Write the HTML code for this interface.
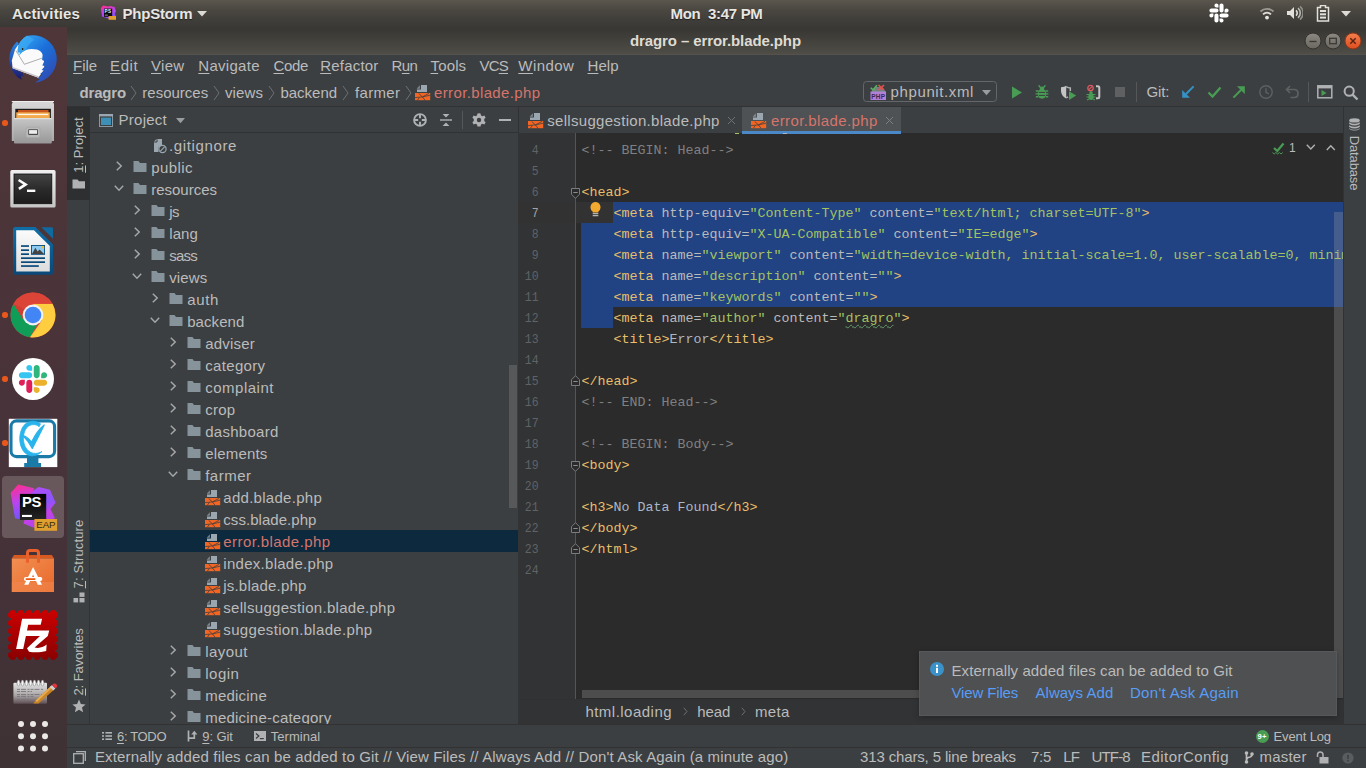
<!DOCTYPE html>
<html lang="en"><head><meta charset="utf-8"><title>dragro – error.blade.php</title>
<style>
html,body{margin:0;padding:0;}
body{width:1366px;height:768px;overflow:hidden;background:#3c3f41;position:relative;font-family:"Liberation Sans",sans-serif;}
.b{position:absolute;display:block;}
.t{position:absolute;white-space:pre;line-height:20px;font-family:"Liberation Sans",sans-serif;}
.t u{text-decoration:underline;text-underline-offset:1.5px;text-decoration-thickness:1px;}
.c{position:absolute;white-space:pre;font-family:"Liberation Mono",monospace;font-size:13.333px;line-height:21px;height:21px;}
</style></head>
<body>
<div class="b" style="left:67px;top:55px;width:1299px;height:51px;background:#3c3f41;"></div>
<span class="t" style="left:73.1px;top:55.8px;font-size:15px;color:#bbb;letter-spacing:-0.07px;"><u>F</u>ile</span>
<span class="t" style="left:110.0px;top:55.8px;font-size:15px;color:#bbb;letter-spacing:0.61px;"><u>E</u>dit</span>
<span class="t" style="left:151.0px;top:55.8px;font-size:15px;color:#bbb;letter-spacing:0.31px;"><u>V</u>iew</span>
<span class="t" style="left:198.3px;top:55.8px;font-size:15px;color:#bbb;letter-spacing:0.29px;"><u>N</u>avigate</span>
<span class="t" style="left:273.5px;top:55.8px;font-size:15px;color:#bbb;letter-spacing:-0.34px;"><u>C</u>ode</span>
<span class="t" style="left:320.2px;top:55.8px;font-size:15px;color:#bbb;letter-spacing:0.20px;"><u>R</u>efactor</span>
<span class="t" style="left:391.6px;top:55.8px;font-size:15px;color:#bbb;letter-spacing:-0.61px;">R<u>u</u>n</span>
<span class="t" style="left:430.5px;top:55.8px;font-size:15px;color:#bbb;letter-spacing:0.15px;"><u>T</u>ools</span>
<span class="t" style="left:479.5px;top:55.8px;font-size:15px;color:#bbb;letter-spacing:-0.80px;">VC<u>S</u></span>
<span class="t" style="left:518.3px;top:55.8px;font-size:15px;color:#bbb;letter-spacing:0.46px;"><u>W</u>indow</span>
<span class="t" style="left:587.5px;top:55.8px;font-size:15px;color:#bbb;letter-spacing:0.04px;"><u>H</u>elp</span>
<span class="t" style="left:79.5px;top:82.8px;font-size:15px;font-weight:700;color:#bbb;letter-spacing:-0.17px;">dragro</span>
<svg class="b" style="left:130px;top:84.5px;" width="7" height="16" viewBox="0 0 7 16"><path d="M1 1 L6 8 L1 15" fill="none" stroke="#6e7173" stroke-width="1"/></svg>
<span class="t" style="left:142.3px;top:82.8px;font-size:15px;color:#bbb;letter-spacing:0.00px;">resources</span>
<svg class="b" style="left:213px;top:84.5px;" width="7" height="16" viewBox="0 0 7 16"><path d="M1 1 L6 8 L1 15" fill="none" stroke="#6e7173" stroke-width="1"/></svg>
<span class="t" style="left:225.0px;top:82.8px;font-size:15px;color:#bbb;letter-spacing:0.10px;">views</span>
<svg class="b" style="left:268px;top:84.5px;" width="7" height="16" viewBox="0 0 7 16"><path d="M1 1 L6 8 L1 15" fill="none" stroke="#6e7173" stroke-width="1"/></svg>
<span class="t" style="left:280.5px;top:82.8px;font-size:15px;color:#bbb;letter-spacing:-0.03px;">backend</span>
<svg class="b" style="left:342px;top:84.5px;" width="7" height="16" viewBox="0 0 7 16"><path d="M1 1 L6 8 L1 15" fill="none" stroke="#6e7173" stroke-width="1"/></svg>
<span class="t" style="left:355.0px;top:82.8px;font-size:15px;color:#bbb;letter-spacing:0.34px;">farmer</span>
<svg class="b" style="left:404.5px;top:84.5px;" width="7" height="16" viewBox="0 0 7 16"><path d="M1 1 L6 8 L1 15" fill="none" stroke="#6e7173" stroke-width="1"/></svg>
<svg class="b" style="left:415px;top:85px;" width="16" height="16" viewBox="0 0 16 16"><path d="M6 0 H12 V7 H2 V4.6 H6Z" fill="#9aa7b0"/><path d="M4.9 0.3 V3.7 H1.6Z" fill="#9aa7b0" opacity=".7"/>
<rect x="0" y="8" width="15.2" height="7.2" fill="#f26522"/>
<path d="M0 12.6 L7.4 11.9 L15.2 10.2 M3.6 8.4 L7.4 11.9 L10 15.2 M7.4 11.9 L14 8.4 M2.4 15.2 L4.4 12.3" stroke="#3c3f41" stroke-width=".9" fill="none" opacity=".85"/></svg>
<span class="t" style="left:434.0px;top:82.8px;font-size:15px;color:#d5756c;letter-spacing:0.37px;">error.blade.php</span>
<div class="b" style="left:863px;top:81px;width:134px;height:21px;border:1px solid #646769;border-radius:3.5px;box-sizing:border-box;"></div>
<svg class="b" style="left:870px;top:84px;" width="17" height="17" viewBox="0 0 17 17"><rect x="0.5" y="7.5" width="15.5" height="8.5" fill="#b180d9"/><path d="M1 8 L6 3 H12 L16 8Z" fill="#9aa7b0" opacity=".6"/>
<path d="M0.8 3.8 L3 6 L7 1.3" fill="none" stroke="#56b35f" stroke-width="1.6"/><path d="M8.5 1 L14 6.2 M14 1 L8.5 6.2" stroke="#e0524c" stroke-width="1.7"/></svg>
<span class="t" style="left:871.3px;top:87.0px;font-size:6.5px;font-weight:700;color:#3c2a52;letter-spacing:0.21px;">PHP</span>
<span class="t" style="left:890.6px;top:81.8px;font-size:15px;color:#bbb;letter-spacing:0.61px;">phpunit.xml</span>
<svg class="b" style="left:982px;top:90px;" width="9" height="6" viewBox="0 0 9 6"><path d="M0 0 H9 L4.5 5.2Z" fill="#9a9da0"/></svg>
<svg class="b" style="left:1011px;top:86px;" width="12" height="13" viewBox="0 0 12 13"><path d="M1 0.5 L11 6.5 L1 12.5Z" fill="#499c54"/></svg>
<svg class="b" style="left:1035px;top:85px;" width="14" height="14" viewBox="0 0 14 14"><g fill="#499c54"><ellipse cx="7" cy="8.8" rx="4.3" ry="5"/><circle cx="7" cy="3.8" r="2.2"/></g>
<g stroke="#499c54" stroke-width="1.4" fill="none"><path d="M3.6 0.3 L5.8 3M10.4 0.3 L8.2 3M0.8 6H3.4M10.6 6H13.2M0.6 8.9H3M11 8.9H13.4M0.8 11.8H3.4M10.6 11.8H13.2"/></g>
<g stroke="#3c3f41" stroke-width="1"><path d="M3.8 7.4H10.2M3.8 10.4H10.2"/></g></svg>
<svg class="b" style="left:1060px;top:85px;" width="17" height="17" viewBox="0 0 17 17"><path d="M1 2.200 Q4.500 2.200 6.200 0.800 V13.400 Q1.800 11.500 1 6.500Z" fill="#c4c4c4"/><path d="M6.200 1.600 Q8 2.900 10.300 3 V6" fill="none" stroke="#afb1b3" stroke-width="1.500"/><path d="M6.200 12.800 Q7.200 12.400 8 11.800" fill="none" stroke="#afb1b3" stroke-width="1.500"/><path d="M9 6.200 L16.200 10.600 L9 15Z" fill="#499c54"/></svg>
<svg class="b" style="left:1086px;top:84px;" width="17" height="18" viewBox="0 0 17 18"><circle cx="4.5" cy="4" r="2.7" fill="none" stroke="#db5860" stroke-width="1.3"/><path d="M2.6 5.9L6.4 2.1" stroke="#db5860" stroke-width="1.2"/>
<g fill="#499c54"><ellipse cx="5" cy="12.5" rx="2.6" ry="3.6"/><circle cx="5" cy="8.7" r="1.6"/></g><g stroke="#499c54" stroke-width="1.1"><path d="M0.5 10.5H3M9.5 10.5H7M0.5 13H3M9.5 13H7M1 16L3 15M9 16L7 15"/></g>
<path d="M10 2.200 H11.800 Q13.300 2.200 13.300 3.700 V12.800 Q13.300 14.300 11.800 14.300 H10" fill="none" stroke="#c4c4c4" stroke-width="2"/></svg>
<div class="b" style="left:1115px;top:87px;width:10px;height:10px;background:#5e6062;"></div>
<div class="b" style="left:1136px;top:82px;width:1px;height:20px;background:#555759;"></div>
<span class="t" style="left:1146.6px;top:81.8px;font-size:15px;color:#bbb;letter-spacing:-0.14px;">Git:</span>
<svg class="b" style="left:1181px;top:85px;" width="14" height="14" viewBox="0 0 14 14"><path d="M12.6 1.4 L5 9" fill="none" stroke="#3592c4" stroke-width="2"/><path d="M1.2 12.8 V5 L9 12.8Z" fill="#3592c4"/></svg>
<svg class="b" style="left:1207px;top:85px;" width="15" height="14" viewBox="0 0 15 14"><path d="M1.5 7.5 L5.5 11.5 L13.5 2.5" fill="none" stroke="#499c54" stroke-width="2.3"/></svg>
<svg class="b" style="left:1232px;top:85px;" width="14" height="14" viewBox="0 0 14 14"><path d="M1.400 12.600 L9 5" fill="none" stroke="#499c54" stroke-width="2"/><path d="M12.800 1.200 V9 L5 1.200Z" fill="#499c54"/></svg>
<svg class="b" style="left:1258px;top:84px;" width="16" height="16" viewBox="0 0 16 16"><circle cx="8" cy="8" r="6.2" fill="none" stroke="#5e6062" stroke-width="1.4"/><path d="M8 4.2V8.4L10.8 9.8" fill="none" stroke="#5e6062" stroke-width="1.4"/></svg>
<svg class="b" style="left:1285px;top:85px;" width="15" height="14" viewBox="0 0 15 14"><path d="M5 1 L1.5 4.5 L5 8 M2 4.5 H9 Q13 4.5 13 8.5 Q13 12.5 9 12.5 H5.5" fill="none" stroke="#5e6062" stroke-width="1.7"/></svg>
<div class="b" style="left:1308px;top:82px;width:1px;height:20px;background:#555759;"></div>
<svg class="b" style="left:1317px;top:85px;" width="16" height="14" viewBox="0 0 16 14"><rect x="0.8" y="0.8" width="14" height="12" fill="none" stroke="#afb1b3" stroke-width="1.5"/><rect x="0.8" y="0.8" width="14" height="2.6" fill="#afb1b3"/><path d="M4.5 5 L9.5 8 L4.5 11Z" fill="#499c54"/></svg>
<svg class="b" style="left:1343px;top:85px;" width="16" height="16" viewBox="0 0 16 16"><circle cx="6.2" cy="6.2" r="4.6" fill="none" stroke="#afb1b3" stroke-width="2"/><path d="M9.6 9.6 L14.5 14.5" stroke="#afb1b3" stroke-width="2.4"/></svg>
<div class="b" style="left:67px;top:106px;width:1299px;height:1px;background:#323232;"></div>
<div class="b" style="left:67px;top:107px;width:23px;height:640px;background:#3c3f41;"></div>
<div class="b" style="left:67px;top:107px;width:23px;height:92.5px;background:#2d2f30;"></div>
<div class="b" style="left:89px;top:199.5px;width:1px;height:524.5px;background:#323537;"></div>
<span class="t" style="left:78.8px;top:144.75px;font-size:13px;color:#bbb;letter-spacing:0.06px;line-height:16px;transform:translate(-50%,-50%) rotate(-90deg);"><u>1</u>: Project</span>
<svg class="b" style="left:72px;top:179px;" width="14" height="10" viewBox="0 0 14 10"><path d="M0.5 0.5 H5.5 L7 2.3 H13 V9.5 H0.5Z" fill="#afb1b3"/></svg>
<span class="t" style="left:78.8px;top:554.0px;font-size:13px;color:#bbb;letter-spacing:0.13px;line-height:16px;transform:translate(-50%,-50%) rotate(-90deg);"><u>7</u>: Structure</span>
<svg class="b" style="left:73px;top:592px;" width="12" height="11" viewBox="0 0 12 11"><rect x="6.5" y="0.5" width="5" height="4.4" fill="#afb1b3"/><rect x="0.5" y="6" width="4.6" height="4.4" fill="#afb1b3"/><rect x="6.5" y="6" width="5" height="4.4" fill="#afb1b3"/></svg>
<span class="t" style="left:78.8px;top:661.6px;font-size:13px;color:#bbb;letter-spacing:-0.06px;line-height:16px;transform:translate(-50%,-50%) rotate(-90deg);"><u>2</u>: Favorites</span>
<svg class="b" style="left:72px;top:699px;" width="14" height="14" viewBox="0 0 14 14"><path d="M7 0.6 L8.9 5 L13.6 5.4 L10 8.5 L11.1 13.2 L7 10.7 L2.9 13.2 L4 8.5 L0.4 5.4 L5.1 5Z" fill="#afb1b3"/></svg>
<div class="b" style="left:1343px;top:107px;width:23px;height:640px;background:#3c3f41;"></div>
<div class="b" style="left:1342.5px;top:107px;width:1px;height:617px;background:#323232;"></div>
<svg class="b" style="left:1349px;top:118px;" width="11" height="13" viewBox="0 0 11 13"><g fill="#afb1b3"><ellipse cx="5.5" cy="2.4" rx="5.3" ry="2.2"/><path d="M0.2 4.2 Q5.5 7.2 10.8 4.2 V6 Q5.5 9 0.2 6Z"/><path d="M0.2 7.2 Q5.5 10.2 10.8 7.2 V9 Q5.5 12 0.2 9Z"/><path d="M0.2 10.2 Q5.5 13.2 10.8 10.2 V11 Q5.5 14 0.2 11Z"/></g></svg>
<span class="t" style="left:1354.3px;top:163.35px;font-size:13px;color:#bbb;letter-spacing:-0.12px;line-height:16px;transform:translate(-50%,-50%) rotate(90deg);">Database</span>
<div class="b" style="left:90px;top:107px;width:428px;height:617px;background:#3c3f41;"></div>
<div class="b" style="left:90px;top:132px;width:428px;height:1px;background:#303335;"></div>
<svg class="b" style="left:99px;top:114px;" width="14" height="13" viewBox="0 0 14 13"><rect x="0.5" y="0.5" width="13" height="12" fill="#3c3f41" stroke="#8b979e" stroke-width="1"/><rect x="0" y="0" width="14" height="2.4" fill="#9aa7b0"/><rect x="2" y="3.6" width="10" height="7.4" fill="#3e8fb5"/></svg>
<span class="t" style="left:118.6px;top:109.5px;font-size:15px;color:#bbb;letter-spacing:0.24px;">Project</span>
<svg class="b" style="left:175.5px;top:118px;" width="9" height="6" viewBox="0 0 9 6"><path d="M0 0 H9 L4.5 5.2Z" fill="#9a9da0"/></svg>
<svg class="b" style="left:413px;top:113px;" width="14" height="14" viewBox="0 0 14 14"><circle cx="7" cy="7" r="5.9" fill="none" stroke="#afb1b3" stroke-width="1.9"/><path d="M7 1V5.2M7 8.8V13M1 7H5.2M8.8 7H13" stroke="#afb1b3" stroke-width="1.9"/></svg>
<svg class="b" style="left:439px;top:113px;" width="14" height="14" viewBox="0 0 14 14"><path d="M1 7H13" stroke="#afb1b3" stroke-width="1.4"/><path d="M3.6 1 H10.4 L7 4.6Z M3.6 13 H10.4 L7 9.4Z" fill="#afb1b3"/></svg>
<div class="b" style="left:462px;top:111px;width:1px;height:18px;background:#555759;"></div>
<svg class="b" style="left:471.5px;top:113px;" width="14" height="14" viewBox="0 0 14 14"><path d="M7 0.3 L8.5 0.5 L9 2.4 L10.6 3.3 L12.4 2.6 L13.6 4.7 L12.2 6 V8 L13.6 9.3 L12.4 11.4 L10.6 10.7 L9 11.6 L8.5 13.5 H5.5 L5 11.6 L3.4 10.7 L1.6 11.4 L0.4 9.3 L1.8 8 V6 L0.4 4.7 L1.6 2.6 L3.4 3.3 L5 2.4 L5.5 0.5Z" fill="#afb1b3"/><circle cx="7" cy="7" r="2.2" fill="#3c3f41"/></svg>
<div class="b" style="left:498.5px;top:119.3px;width:12.5px;height:1.7px;background:#afb1b3;"></div>
<svg class="b" style="left:151.5px;top:138px;" width="16" height="16" viewBox="0 0 16 16"><path d="M4.5 1 H10 V9 H2 V3.5Z" fill="#9aa7b0"/><path d="M5 1.2V4H2.2" fill="none" stroke="#3c3f41" stroke-width="1"/><circle cx="10.5" cy="11" r="3.6" fill="#3c3f41" stroke="#9aa7b0" stroke-width="1.2"/><path d="M8.2 13.3L12.8 8.7" stroke="#9aa7b0" stroke-width="1.1"/><path d="M2 9 H6.5 V14 H2Z" fill="#9aa7b0"/></svg>
<span class="t" style="left:169.0px;top:135.8px;font-size:15px;color:#bbb;letter-spacing:0.63px;">.gitignore</span>
<svg class="b" style="left:116px;top:161.3px;" width="7" height="10" viewBox="0 0 7 10"><path d="M0.8 0.8 L5.2 5 L0.8 9.2" fill="none" stroke="#a4a6a8" stroke-width="1.5"/></svg>
<svg class="b" style="left:133px;top:159.6px;" width="14" height="13" viewBox="0 0 14 13"><path d="M0.5 1 H5.5 L7 3 H13.5 V12 H0.5Z" fill="#87939a"/></svg>
<span class="t" style="left:151.2px;top:157.8px;font-size:15px;color:#bbb;letter-spacing:0.42px;">public</span>
<svg class="b" style="left:114px;top:185.3px;" width="10" height="7" viewBox="0 0 10 7"><path d="M0.8 0.8 L5 5.2 L9.2 0.8" fill="none" stroke="#a4a6a8" stroke-width="1.5"/></svg>
<svg class="b" style="left:133px;top:181.6px;" width="14" height="13" viewBox="0 0 14 13"><path d="M0.5 1 H5.5 L7 3 H13.5 V12 H0.5Z" fill="#87939a"/></svg>
<span class="t" style="left:151.2px;top:179.8px;font-size:15px;color:#bbb;letter-spacing:-0.01px;">resources</span>
<svg class="b" style="left:134px;top:205.3px;" width="7" height="10" viewBox="0 0 7 10"><path d="M0.8 0.8 L5.2 5 L0.8 9.2" fill="none" stroke="#a4a6a8" stroke-width="1.5"/></svg>
<svg class="b" style="left:151px;top:203.6px;" width="14" height="13" viewBox="0 0 14 13"><path d="M0.5 1 H5.5 L7 3 H13.5 V12 H0.5Z" fill="#87939a"/></svg>
<span class="t" style="left:169.2px;top:201.8px;font-size:15px;color:#bbb;letter-spacing:-0.52px;">js</span>
<svg class="b" style="left:134px;top:227.3px;" width="7" height="10" viewBox="0 0 7 10"><path d="M0.8 0.8 L5.2 5 L0.8 9.2" fill="none" stroke="#a4a6a8" stroke-width="1.5"/></svg>
<svg class="b" style="left:151px;top:225.6px;" width="14" height="13" viewBox="0 0 14 13"><path d="M0.5 1 H5.5 L7 3 H13.5 V12 H0.5Z" fill="#87939a"/></svg>
<span class="t" style="left:169.2px;top:223.8px;font-size:15px;color:#bbb;letter-spacing:0.11px;">lang</span>
<svg class="b" style="left:134px;top:249.3px;" width="7" height="10" viewBox="0 0 7 10"><path d="M0.8 0.8 L5.2 5 L0.8 9.2" fill="none" stroke="#a4a6a8" stroke-width="1.5"/></svg>
<svg class="b" style="left:151px;top:247.6px;" width="14" height="13" viewBox="0 0 14 13"><path d="M0.5 1 H5.5 L7 3 H13.5 V12 H0.5Z" fill="#87939a"/></svg>
<span class="t" style="left:169.2px;top:245.8px;font-size:15px;color:#bbb;letter-spacing:-0.76px;">sass</span>
<svg class="b" style="left:132px;top:273.3px;" width="10" height="7" viewBox="0 0 10 7"><path d="M0.8 0.8 L5 5.2 L9.2 0.8" fill="none" stroke="#a4a6a8" stroke-width="1.5"/></svg>
<svg class="b" style="left:151px;top:269.6px;" width="14" height="13" viewBox="0 0 14 13"><path d="M0.5 1 H5.5 L7 3 H13.5 V12 H0.5Z" fill="#87939a"/></svg>
<span class="t" style="left:169.2px;top:267.8px;font-size:15px;color:#bbb;letter-spacing:0.16px;">views</span>
<svg class="b" style="left:152px;top:293.3px;" width="7" height="10" viewBox="0 0 7 10"><path d="M0.8 0.8 L5.2 5 L0.8 9.2" fill="none" stroke="#a4a6a8" stroke-width="1.5"/></svg>
<svg class="b" style="left:169px;top:291.6px;" width="14" height="13" viewBox="0 0 14 13"><path d="M0.5 1 H5.5 L7 3 H13.5 V12 H0.5Z" fill="#87939a"/></svg>
<span class="t" style="left:187.2px;top:289.8px;font-size:15px;color:#bbb;letter-spacing:0.65px;">auth</span>
<svg class="b" style="left:150px;top:317.3px;" width="10" height="7" viewBox="0 0 10 7"><path d="M0.8 0.8 L5 5.2 L9.2 0.8" fill="none" stroke="#a4a6a8" stroke-width="1.5"/></svg>
<svg class="b" style="left:169px;top:313.6px;" width="14" height="13" viewBox="0 0 14 13"><path d="M0.5 1 H5.5 L7 3 H13.5 V12 H0.5Z" fill="#87939a"/></svg>
<span class="t" style="left:187.2px;top:311.8px;font-size:15px;color:#bbb;letter-spacing:0.08px;">backend</span>
<svg class="b" style="left:170px;top:337.3px;" width="7" height="10" viewBox="0 0 7 10"><path d="M0.8 0.8 L5.2 5 L0.8 9.2" fill="none" stroke="#a4a6a8" stroke-width="1.5"/></svg>
<svg class="b" style="left:187px;top:335.6px;" width="14" height="13" viewBox="0 0 14 13"><path d="M0.5 1 H5.5 L7 3 H13.5 V12 H0.5Z" fill="#87939a"/></svg>
<span class="t" style="left:205.2px;top:333.8px;font-size:15px;color:#bbb;letter-spacing:0.21px;">adviser</span>
<svg class="b" style="left:170px;top:359.3px;" width="7" height="10" viewBox="0 0 7 10"><path d="M0.8 0.8 L5.2 5 L0.8 9.2" fill="none" stroke="#a4a6a8" stroke-width="1.5"/></svg>
<svg class="b" style="left:187px;top:357.6px;" width="14" height="13" viewBox="0 0 14 13"><path d="M0.5 1 H5.5 L7 3 H13.5 V12 H0.5Z" fill="#87939a"/></svg>
<span class="t" style="left:205.2px;top:355.8px;font-size:15px;color:#bbb;letter-spacing:0.34px;">category</span>
<svg class="b" style="left:170px;top:381.3px;" width="7" height="10" viewBox="0 0 7 10"><path d="M0.8 0.8 L5.2 5 L0.8 9.2" fill="none" stroke="#a4a6a8" stroke-width="1.5"/></svg>
<svg class="b" style="left:187px;top:379.6px;" width="14" height="13" viewBox="0 0 14 13"><path d="M0.5 1 H5.5 L7 3 H13.5 V12 H0.5Z" fill="#87939a"/></svg>
<span class="t" style="left:205.2px;top:377.8px;font-size:15px;color:#bbb;letter-spacing:0.51px;">complaint</span>
<svg class="b" style="left:170px;top:403.3px;" width="7" height="10" viewBox="0 0 7 10"><path d="M0.8 0.8 L5.2 5 L0.8 9.2" fill="none" stroke="#a4a6a8" stroke-width="1.5"/></svg>
<svg class="b" style="left:187px;top:401.6px;" width="14" height="13" viewBox="0 0 14 13"><path d="M0.5 1 H5.5 L7 3 H13.5 V12 H0.5Z" fill="#87939a"/></svg>
<span class="t" style="left:205.2px;top:399.8px;font-size:15px;color:#bbb;letter-spacing:0.28px;">crop</span>
<svg class="b" style="left:170px;top:425.3px;" width="7" height="10" viewBox="0 0 7 10"><path d="M0.8 0.8 L5.2 5 L0.8 9.2" fill="none" stroke="#a4a6a8" stroke-width="1.5"/></svg>
<svg class="b" style="left:187px;top:423.6px;" width="14" height="13" viewBox="0 0 14 13"><path d="M0.5 1 H5.5 L7 3 H13.5 V12 H0.5Z" fill="#87939a"/></svg>
<span class="t" style="left:205.2px;top:421.8px;font-size:15px;color:#bbb;letter-spacing:0.27px;">dashboard</span>
<svg class="b" style="left:170px;top:447.3px;" width="7" height="10" viewBox="0 0 7 10"><path d="M0.8 0.8 L5.2 5 L0.8 9.2" fill="none" stroke="#a4a6a8" stroke-width="1.5"/></svg>
<svg class="b" style="left:187px;top:445.6px;" width="14" height="13" viewBox="0 0 14 13"><path d="M0.5 1 H5.5 L7 3 H13.5 V12 H0.5Z" fill="#87939a"/></svg>
<span class="t" style="left:205.2px;top:443.8px;font-size:15px;color:#bbb;letter-spacing:0.18px;">elements</span>
<svg class="b" style="left:168px;top:471.3px;" width="10" height="7" viewBox="0 0 10 7"><path d="M0.8 0.8 L5 5.2 L9.2 0.8" fill="none" stroke="#a4a6a8" stroke-width="1.5"/></svg>
<svg class="b" style="left:187px;top:467.6px;" width="14" height="13" viewBox="0 0 14 13"><path d="M0.5 1 H5.5 L7 3 H13.5 V12 H0.5Z" fill="#87939a"/></svg>
<span class="t" style="left:205.2px;top:465.8px;font-size:15px;color:#bbb;letter-spacing:0.49px;">farmer</span>
<svg class="b" style="left:205px;top:490px;" width="16" height="16" viewBox="0 0 16 16"><path d="M6 0 H12 V7 H2 V4.6 H6Z" fill="#9aa7b0"/><path d="M4.9 0.3 V3.7 H1.6Z" fill="#9aa7b0" opacity=".7"/>
<rect x="0" y="8" width="15.2" height="7.2" fill="#f26522"/>
<path d="M0 12.6 L7.4 11.9 L15.2 10.2 M3.6 8.4 L7.4 11.9 L10 15.2 M7.4 11.9 L14 8.4 M2.4 15.2 L4.4 12.3" stroke="#3c3f41" stroke-width=".9" fill="none" opacity=".85"/></svg>
<span class="t" style="left:223.3px;top:487.8px;font-size:15px;color:#bbb;letter-spacing:0.28px;">add.blade.php</span>
<svg class="b" style="left:205px;top:512px;" width="16" height="16" viewBox="0 0 16 16"><path d="M6 0 H12 V7 H2 V4.6 H6Z" fill="#9aa7b0"/><path d="M4.9 0.3 V3.7 H1.6Z" fill="#9aa7b0" opacity=".7"/>
<rect x="0" y="8" width="15.2" height="7.2" fill="#f26522"/>
<path d="M0 12.6 L7.4 11.9 L15.2 10.2 M3.6 8.4 L7.4 11.9 L10 15.2 M7.4 11.9 L14 8.4 M2.4 15.2 L4.4 12.3" stroke="#3c3f41" stroke-width=".9" fill="none" opacity=".85"/></svg>
<span class="t" style="left:223.3px;top:509.8px;font-size:15px;color:#bbb;letter-spacing:0.05px;">css.blade.php</span>
<div class="b" style="left:90px;top:530px;width:428px;height:22px;background:#0d293e;"></div>
<svg class="b" style="left:205px;top:534px;" width="16" height="16" viewBox="0 0 16 16"><path d="M6 0 H12 V7 H2 V4.6 H6Z" fill="#9aa7b0"/><path d="M4.9 0.3 V3.7 H1.6Z" fill="#9aa7b0" opacity=".7"/>
<rect x="0" y="8" width="15.2" height="7.2" fill="#f26522"/>
<path d="M0 12.6 L7.4 11.9 L15.2 10.2 M3.6 8.4 L7.4 11.9 L10 15.2 M7.4 11.9 L14 8.4 M2.4 15.2 L4.4 12.3" stroke="#3c3f41" stroke-width=".9" fill="none" opacity=".85"/></svg>
<span class="t" style="left:223.3px;top:531.8px;font-size:15px;color:#d5756c;letter-spacing:0.42px;">error.blade.php</span>
<svg class="b" style="left:205px;top:556px;" width="16" height="16" viewBox="0 0 16 16"><path d="M6 0 H12 V7 H2 V4.6 H6Z" fill="#9aa7b0"/><path d="M4.9 0.3 V3.7 H1.6Z" fill="#9aa7b0" opacity=".7"/>
<rect x="0" y="8" width="15.2" height="7.2" fill="#f26522"/>
<path d="M0 12.6 L7.4 11.9 L15.2 10.2 M3.6 8.4 L7.4 11.9 L10 15.2 M7.4 11.9 L14 8.4 M2.4 15.2 L4.4 12.3" stroke="#3c3f41" stroke-width=".9" fill="none" opacity=".85"/></svg>
<span class="t" style="left:223.3px;top:553.8px;font-size:15px;color:#bbb;letter-spacing:0.28px;">index.blade.php</span>
<svg class="b" style="left:205px;top:578px;" width="16" height="16" viewBox="0 0 16 16"><path d="M6 0 H12 V7 H2 V4.6 H6Z" fill="#9aa7b0"/><path d="M4.9 0.3 V3.7 H1.6Z" fill="#9aa7b0" opacity=".7"/>
<rect x="0" y="8" width="15.2" height="7.2" fill="#f26522"/>
<path d="M0 12.6 L7.4 11.9 L15.2 10.2 M3.6 8.4 L7.4 11.9 L10 15.2 M7.4 11.9 L14 8.4 M2.4 15.2 L4.4 12.3" stroke="#3c3f41" stroke-width=".9" fill="none" opacity=".85"/></svg>
<span class="t" style="left:223.3px;top:575.8px;font-size:15px;color:#bbb;letter-spacing:0.19px;">js.blade.php</span>
<svg class="b" style="left:205px;top:600px;" width="16" height="16" viewBox="0 0 16 16"><path d="M6 0 H12 V7 H2 V4.6 H6Z" fill="#9aa7b0"/><path d="M4.9 0.3 V3.7 H1.6Z" fill="#9aa7b0" opacity=".7"/>
<rect x="0" y="8" width="15.2" height="7.2" fill="#f26522"/>
<path d="M0 12.6 L7.4 11.9 L15.2 10.2 M3.6 8.4 L7.4 11.9 L10 15.2 M7.4 11.9 L14 8.4 M2.4 15.2 L4.4 12.3" stroke="#3c3f41" stroke-width=".9" fill="none" opacity=".85"/></svg>
<span class="t" style="left:223.3px;top:597.8px;font-size:15px;color:#bbb;letter-spacing:0.29px;">sellsuggestion.blade.php</span>
<svg class="b" style="left:205px;top:622px;" width="16" height="16" viewBox="0 0 16 16"><path d="M6 0 H12 V7 H2 V4.6 H6Z" fill="#9aa7b0"/><path d="M4.9 0.3 V3.7 H1.6Z" fill="#9aa7b0" opacity=".7"/>
<rect x="0" y="8" width="15.2" height="7.2" fill="#f26522"/>
<path d="M0 12.6 L7.4 11.9 L15.2 10.2 M3.6 8.4 L7.4 11.9 L10 15.2 M7.4 11.9 L14 8.4 M2.4 15.2 L4.4 12.3" stroke="#3c3f41" stroke-width=".9" fill="none" opacity=".85"/></svg>
<span class="t" style="left:223.3px;top:619.8px;font-size:15px;color:#bbb;letter-spacing:0.33px;">suggestion.blade.php</span>
<svg class="b" style="left:170px;top:645.3px;" width="7" height="10" viewBox="0 0 7 10"><path d="M0.8 0.8 L5.2 5 L0.8 9.2" fill="none" stroke="#a4a6a8" stroke-width="1.5"/></svg>
<svg class="b" style="left:187px;top:643.6px;" width="14" height="13" viewBox="0 0 14 13"><path d="M0.5 1 H5.5 L7 3 H13.5 V12 H0.5Z" fill="#87939a"/></svg>
<span class="t" style="left:205.2px;top:641.8px;font-size:15px;color:#bbb;letter-spacing:0.46px;">layout</span>
<svg class="b" style="left:170px;top:667.3px;" width="7" height="10" viewBox="0 0 7 10"><path d="M0.8 0.8 L5.2 5 L0.8 9.2" fill="none" stroke="#a4a6a8" stroke-width="1.5"/></svg>
<svg class="b" style="left:187px;top:665.6px;" width="14" height="13" viewBox="0 0 14 13"><path d="M0.5 1 H5.5 L7 3 H13.5 V12 H0.5Z" fill="#87939a"/></svg>
<span class="t" style="left:205.2px;top:663.8px;font-size:15px;color:#bbb;letter-spacing:0.52px;">login</span>
<svg class="b" style="left:170px;top:689.3px;" width="7" height="10" viewBox="0 0 7 10"><path d="M0.8 0.8 L5.2 5 L0.8 9.2" fill="none" stroke="#a4a6a8" stroke-width="1.5"/></svg>
<svg class="b" style="left:187px;top:687.6px;" width="14" height="13" viewBox="0 0 14 13"><path d="M0.5 1 H5.5 L7 3 H13.5 V12 H0.5Z" fill="#87939a"/></svg>
<span class="t" style="left:205.2px;top:685.8px;font-size:15px;color:#bbb;letter-spacing:0.22px;">medicine</span>
<svg class="b" style="left:170px;top:711.3px;" width="7" height="10" viewBox="0 0 7 10"><path d="M0.8 0.8 L5.2 5 L0.8 9.2" fill="none" stroke="#a4a6a8" stroke-width="1.5"/></svg>
<svg class="b" style="left:187px;top:709.6px;" width="14" height="13" viewBox="0 0 14 13"><path d="M0.5 1 H5.5 L7 3 H13.5 V12 H0.5Z" fill="#87939a"/></svg>
<span class="t" style="left:205.2px;top:707.8px;font-size:15px;color:#bbb;letter-spacing:0.22px;">medicine-category</span>
<div class="b" style="left:509px;top:365px;width:8px;height:143px;background:#5a5d5f;opacity:.85;"></div>
<div class="b" style="left:518px;top:107px;width:825px;height:26px;background:#3c3f41;"></div>
<div class="b" style="left:518px;top:107px;width:1px;height:617px;background:#2f3133;"></div>
<svg class="b" style="left:527.5px;top:113px;" width="16" height="16" viewBox="0 0 16 16"><path d="M6 0 H12 V7 H2 V4.6 H6Z" fill="#9aa7b0"/><path d="M4.9 0.3 V3.7 H1.6Z" fill="#9aa7b0" opacity=".7"/>
<rect x="0" y="8" width="15.2" height="7.2" fill="#f26522"/>
<path d="M0 12.6 L7.4 11.9 L15.2 10.2 M3.6 8.4 L7.4 11.9 L10 15.2 M7.4 11.9 L14 8.4 M2.4 15.2 L4.4 12.3" stroke="#3c3f41" stroke-width=".9" fill="none" opacity=".85"/></svg>
<span class="t" style="left:547.2px;top:110.8px;font-size:15px;color:#bbb;letter-spacing:0.31px;">sellsuggestion.blade.php</span>
<svg class="b" style="left:727px;top:116px;" width="9" height="9" viewBox="0 0 9 9"><path d="M1 1L8 8M8 1L1 8" stroke="#6f7274" stroke-width="1"/></svg>
<div class="b" style="left:742px;top:107px;width:159px;height:27px;background:#4e5254;"></div>
<div class="b" style="left:742px;top:131px;width:159px;height:3px;background:#4a88c7;"></div>
<svg class="b" style="left:750.5px;top:113px;" width="16" height="16" viewBox="0 0 16 16"><path d="M6 0 H12 V7 H2 V4.6 H6Z" fill="#9aa7b0"/><path d="M4.9 0.3 V3.7 H1.6Z" fill="#9aa7b0" opacity=".7"/>
<rect x="0" y="8" width="15.2" height="7.2" fill="#f26522"/>
<path d="M0 12.6 L7.4 11.9 L15.2 10.2 M3.6 8.4 L7.4 11.9 L10 15.2 M7.4 11.9 L14 8.4 M2.4 15.2 L4.4 12.3" stroke="#3c3f41" stroke-width=".9" fill="none" opacity=".85"/></svg>
<span class="t" style="left:771.0px;top:110.8px;font-size:15px;color:#d5756c;letter-spacing:0.39px;">error.blade.php</span>
<svg class="b" style="left:885px;top:116px;" width="9" height="9" viewBox="0 0 9 9"><path d="M1 1L8 8M8 1L1 8" stroke="#7d8082" stroke-width="1"/></svg>
<div class="b" style="left:518px;top:133px;width:825px;height:567px;background:#2b2b2b;"></div>
<div class="b" style="left:518px;top:133px;width:57px;height:567px;background:#313335;"></div>
<div class="b" style="left:742px;top:133px;width:159px;height:1px;background:#4a88c7;"></div>
<div class="b" style="left:518px;top:202px;width:57px;height:21px;background:#323232;"></div>
<div class="b" style="left:575px;top:202px;width:768px;height:21px;background:#323232;"></div>
<div class="b" style="left:575px;top:133px;width:1px;height:567px;background:#555555;"></div>
<div class="b" style="left:613px;top:202px;width:730px;height:21px;background:#214283;"></div>
<div class="b" style="left:581px;top:223px;width:762px;height:84px;background:#214283;"></div>
<div class="b" style="left:581px;top:307px;width:32px;height:21px;background:#214283;"></div>
<div class="b" style="left:735px;top:133px;width:3.5px;height:1.3px;background:#a5c261;"></div>
<div class="b" style="left:783px;top:133px;width:4px;height:1.3px;background:#a9b7c6;"></div>
<div class="b" style="left:0;top:0;width:1342.5px;height:700px;overflow:hidden;">
<span class="c" style="left:518px;width:20.6px;top:140px;text-align:right;color:#606366;transform:scaleX(.86);transform-origin:100% 50%;">4</span>
<span class="c" style="left:581.5px;top:140px;color:#a9b7c6;"><span style="color:#808080">&lt;!-- BEGIN: Head--&gt;</span></span>
<span class="c" style="left:518px;width:20.6px;top:161px;text-align:right;color:#606366;transform:scaleX(.86);transform-origin:100% 50%;">5</span>
<span class="c" style="left:518px;width:20.6px;top:182px;text-align:right;color:#606366;transform:scaleX(.86);transform-origin:100% 50%;">6</span>
<span class="c" style="left:581.5px;top:182px;color:#a9b7c6;"><span style="color:#e8bf6a">&lt;head&gt;</span></span>
<span class="c" style="left:518px;width:20.6px;top:203px;text-align:right;color:#a4a3a3;transform:scaleX(.86);transform-origin:100% 50%;">7</span>
<span class="c" style="left:581.5px;top:203px;color:#a9b7c6;">    <span style="color:#e8bf6a">&lt;meta</span> <span style="color:#bababa">http-equiv=</span><span style="color:#a5c261">"Content-Type"</span> <span style="color:#bababa">content=</span><span style="color:#a5c261">"text/html; charset=UTF-8"</span><span style="color:#e8bf6a">&gt;</span></span>
<span class="c" style="left:518px;width:20.6px;top:224px;text-align:right;color:#606366;transform:scaleX(.86);transform-origin:100% 50%;">8</span>
<span class="c" style="left:581.5px;top:224px;color:#a9b7c6;">    <span style="color:#e8bf6a">&lt;meta</span> <span style="color:#bababa">http-equiv=</span><span style="color:#a5c261">"X-UA-Compatible"</span> <span style="color:#bababa">content=</span><span style="color:#a5c261">"IE=edge"</span><span style="color:#e8bf6a">&gt;</span></span>
<span class="c" style="left:518px;width:20.6px;top:245px;text-align:right;color:#606366;transform:scaleX(.86);transform-origin:100% 50%;">9</span>
<span class="c" style="left:581.5px;top:245px;color:#a9b7c6;">    <span style="color:#e8bf6a">&lt;meta</span> <span style="color:#bababa">name=</span><span style="color:#a5c261">"viewport"</span> <span style="color:#bababa">content=</span><span style="color:#a5c261">"width=device-width, initial-scale=1.0, user-scalable=0, minimal-ui"</span><span style="color:#e8bf6a">&gt;</span></span>
<span class="c" style="left:518px;width:20.6px;top:266px;text-align:right;color:#606366;transform:scaleX(.86);transform-origin:100% 50%;">10</span>
<span class="c" style="left:581.5px;top:266px;color:#a9b7c6;">    <span style="color:#e8bf6a">&lt;meta</span> <span style="color:#bababa">name=</span><span style="color:#a5c261">"description"</span> <span style="color:#bababa">content=</span><span style="color:#a5c261">""</span><span style="color:#e8bf6a">&gt;</span></span>
<span class="c" style="left:518px;width:20.6px;top:287px;text-align:right;color:#606366;transform:scaleX(.86);transform-origin:100% 50%;">11</span>
<span class="c" style="left:581.5px;top:287px;color:#a9b7c6;">    <span style="color:#e8bf6a">&lt;meta</span> <span style="color:#bababa">name=</span><span style="color:#a5c261">"keywords"</span> <span style="color:#bababa">content=</span><span style="color:#a5c261">""</span><span style="color:#e8bf6a">&gt;</span></span>
<span class="c" style="left:518px;width:20.6px;top:308px;text-align:right;color:#606366;transform:scaleX(.86);transform-origin:100% 50%;">12</span>
<span class="c" style="left:581.5px;top:308px;color:#a9b7c6;">    <span style="color:#e8bf6a">&lt;meta</span> <span style="color:#bababa">name=</span><span style="color:#a5c261">"author"</span> <span style="color:#bababa">content=</span><span style="color:#a5c261">"</span><span style="color:#a5c261;text-decoration:underline wavy #659c6b 1px;text-underline-offset:2px;text-decoration-skip-ink:none">dragro</span><span style="color:#a5c261">"</span><span style="color:#e8bf6a">&gt;</span></span>
<span class="c" style="left:518px;width:20.6px;top:329px;text-align:right;color:#606366;transform:scaleX(.86);transform-origin:100% 50%;">13</span>
<span class="c" style="left:581.5px;top:329px;color:#a9b7c6;">    <span style="color:#e8bf6a">&lt;title&gt;</span><span style="color:#a9b7c6">Error</span><span style="color:#e8bf6a">&lt;/title&gt;</span></span>
<span class="c" style="left:518px;width:20.6px;top:350px;text-align:right;color:#606366;transform:scaleX(.86);transform-origin:100% 50%;">14</span>
<span class="c" style="left:518px;width:20.6px;top:371px;text-align:right;color:#606366;transform:scaleX(.86);transform-origin:100% 50%;">15</span>
<span class="c" style="left:581.5px;top:371px;color:#a9b7c6;"><span style="color:#e8bf6a">&lt;/head&gt;</span></span>
<span class="c" style="left:518px;width:20.6px;top:392px;text-align:right;color:#606366;transform:scaleX(.86);transform-origin:100% 50%;">16</span>
<span class="c" style="left:581.5px;top:392px;color:#a9b7c6;"><span style="color:#808080">&lt;!-- END: Head--&gt;</span></span>
<span class="c" style="left:518px;width:20.6px;top:413px;text-align:right;color:#606366;transform:scaleX(.86);transform-origin:100% 50%;">17</span>
<span class="c" style="left:518px;width:20.6px;top:434px;text-align:right;color:#606366;transform:scaleX(.86);transform-origin:100% 50%;">18</span>
<span class="c" style="left:581.5px;top:434px;color:#a9b7c6;"><span style="color:#808080">&lt;!-- BEGIN: Body--&gt;</span></span>
<span class="c" style="left:518px;width:20.6px;top:455px;text-align:right;color:#606366;transform:scaleX(.86);transform-origin:100% 50%;">19</span>
<span class="c" style="left:581.5px;top:455px;color:#a9b7c6;"><span style="color:#e8bf6a">&lt;body&gt;</span></span>
<span class="c" style="left:518px;width:20.6px;top:476px;text-align:right;color:#606366;transform:scaleX(.86);transform-origin:100% 50%;">20</span>
<span class="c" style="left:518px;width:20.6px;top:497px;text-align:right;color:#606366;transform:scaleX(.86);transform-origin:100% 50%;">21</span>
<span class="c" style="left:581.5px;top:497px;color:#a9b7c6;"><span style="color:#e8bf6a">&lt;h3&gt;</span><span style="color:#a9b7c6">No Data Found</span><span style="color:#e8bf6a">&lt;/h3&gt;</span></span>
<span class="c" style="left:518px;width:20.6px;top:518px;text-align:right;color:#606366;transform:scaleX(.86);transform-origin:100% 50%;">22</span>
<span class="c" style="left:581.5px;top:518px;color:#a9b7c6;"><span style="color:#e8bf6a">&lt;/body&gt;</span></span>
<span class="c" style="left:518px;width:20.6px;top:539px;text-align:right;color:#606366;transform:scaleX(.86);transform-origin:100% 50%;">23</span>
<span class="c" style="left:581.5px;top:539px;color:#a9b7c6;"><span style="color:#e8bf6a">&lt;/html&gt;</span></span>
<span class="c" style="left:518px;width:20.6px;top:560px;text-align:right;color:#606366;transform:scaleX(.86);transform-origin:100% 50%;">24</span>
</div>
<svg class="b" style="left:571px;top:188px;" width="9" height="11" viewBox="0 0 9 11"><path d="M0.5 0.5 H8.5 V6.3 L4.5 10.3 L0.5 6.3Z" fill="#2b2b2b" stroke="#7a7c7e" stroke-width="1"/><path d="M2.3 4.5H6.700" stroke="#8a8c8e" stroke-width="1"/></svg>
<svg class="b" style="left:571px;top:375px;" width="9" height="11" viewBox="0 0 9 11"><path d="M0.5 10.5 H8.5 V4.700 L4.5 0.700 L0.5 4.700Z" fill="#2b2b2b" stroke="#7a7c7e" stroke-width="1"/><path d="M2.3 6.5H6.700" stroke="#8a8c8e" stroke-width="1"/></svg>
<svg class="b" style="left:571px;top:461px;" width="9" height="11" viewBox="0 0 9 11"><path d="M0.5 0.5 H8.5 V6.3 L4.5 10.3 L0.5 6.3Z" fill="#2b2b2b" stroke="#7a7c7e" stroke-width="1"/><path d="M2.3 4.5H6.700" stroke="#8a8c8e" stroke-width="1"/></svg>
<svg class="b" style="left:571px;top:522px;" width="9" height="11" viewBox="0 0 9 11"><path d="M0.5 10.5 H8.5 V4.700 L4.5 0.700 L0.5 4.700Z" fill="#2b2b2b" stroke="#7a7c7e" stroke-width="1"/><path d="M2.3 6.5H6.700" stroke="#8a8c8e" stroke-width="1"/></svg>
<svg class="b" style="left:571px;top:543px;" width="9" height="11" viewBox="0 0 9 11"><path d="M0.5 10.5 H8.5 V4.700 L4.5 0.700 L0.5 4.700Z" fill="#2b2b2b" stroke="#7a7c7e" stroke-width="1"/><path d="M2.3 6.5H6.700" stroke="#8a8c8e" stroke-width="1"/></svg>
<svg class="b" style="left:589.5px;top:202px;" width="11" height="15" viewBox="0 0 11 15"><path d="M5.5 0 A5.2 5.2 0 0 1 8.6 9.2 L8.2 10.4 H2.8 L2.4 9.2 A5.2 5.2 0 0 1 5.5 0Z" fill="#f2a930"/><rect x="2.7" y="11.2" width="5.6" height="1" fill="#d4d4d4"/><rect x="2.7" y="13.2" width="5.6" height="1" fill="#d4d4d4"/></svg>
<svg class="b" style="left:1272px;top:142px;" width="13" height="13" viewBox="0 0 13 13"><path d="M2 6 L5.3 9 L11.5 1.5" fill="none" stroke="#499c54" stroke-width="2.2"/><path d="M0.5 10.5 L2.2 12 L3.9 10.5 L5.6 12 L7.3 10.5 L9 12 L10.7 10.5" fill="none" stroke="#499c54" stroke-width="1"/></svg>
<span class="t" style="left:1289.0px;top:137.6px;font-size:12px;color:#bbb;letter-spacing:-0.80px;">1</span>
<svg class="b" style="left:1305.5px;top:144px;" width="10" height="7" viewBox="0 0 10 7"><path d="M0.8 0.8 L4.8 5 L8.8 0.8" fill="none" stroke="#afb1b3" stroke-width="1.4"/></svg>
<svg class="b" style="left:1325.5px;top:144px;" width="10" height="7" viewBox="0 0 10 7"><path d="M0.8 6 L4.8 1.8 L8.8 6" fill="none" stroke="#afb1b3" stroke-width="1.4"/></svg>
<div class="b" style="left:1334px;top:212px;width:8.5px;height:486px;background:rgba(166,166,166,.28);"></div>
<div class="b" style="left:582px;top:690px;width:700px;height:8px;background:rgba(166,166,166,.28);"></div>
<div class="b" style="left:518px;top:699px;width:825px;height:25px;background:#313335;"></div>
<div class="b" style="left:518px;top:699px;width:825px;height:1px;background:#2f3133;"></div>
<span class="t" style="left:585.4px;top:701.8px;font-size:15px;color:#bbb;letter-spacing:0.48px;">html.loading</span>
<svg class="b" style="left:683px;top:707px;" width="5" height="9" viewBox="0 0 5 9"><path d="M0.8 0.8 L4 4.5 L0.8 8.2" fill="none" stroke="#6e7173" stroke-width="1"/></svg>
<span class="t" style="left:697.2px;top:701.8px;font-size:15px;color:#bbb;letter-spacing:-0.07px;">head</span>
<svg class="b" style="left:741px;top:707px;" width="5" height="9" viewBox="0 0 5 9"><path d="M0.8 0.8 L4 4.5 L0.8 8.2" fill="none" stroke="#6e7173" stroke-width="1"/></svg>
<span class="t" style="left:755.0px;top:701.8px;font-size:15px;color:#bbb;letter-spacing:0.34px;">meta</span>
<div class="b" style="left:67px;top:724px;width:1299px;height:44px;background:#3c3f41;"></div>
<div class="b" style="left:67px;top:724px;width:1299px;height:1px;background:#323232;"></div>
<div class="b" style="left:67px;top:747px;width:1299px;height:1px;background:#323232;"></div>
<svg class="b" style="left:102px;top:731px;" width="10" height="10" viewBox="0 0 10 10"><g fill="#afb1b3"><rect x="0" y="1" width="2" height="1.6"/><rect x="3.4" y="1" width="6.6" height="1.6"/><rect x="0" y="4.2" width="2" height="1.6"/><rect x="3.4" y="4.2" width="6.6" height="1.6"/><rect x="0" y="7.4" width="2" height="1.6"/><rect x="3.4" y="7.4" width="6.6" height="1.6"/></g></svg>
<span class="t" style="left:117.0px;top:726.5px;font-size:13px;color:#bbb;letter-spacing:-0.34px;"><u>6</u>: TODO</span>
<svg class="b" style="left:187px;top:730px;" width="11" height="12" viewBox="0 0 11 12"><path d="M1.500 0.500V11.500M1.500 8.200H7.300V3.500" fill="none" stroke="#afb1b3" stroke-width="1.700"/><path d="M4.200 4.600 L7.300 0.800 L10.400 4.600Z" fill="#afb1b3"/></svg>
<span class="t" style="left:202.3px;top:726.5px;font-size:13px;color:#bbb;letter-spacing:-0.11px;"><u>9</u>: Git</span>
<svg class="b" style="left:254px;top:731px;" width="12" height="10" viewBox="0 0 12 10"><rect width="12" height="10" fill="#afb1b3"/><path d="M2 2.5 L4.8 5 L2 7.5" fill="none" stroke="#3c3f41" stroke-width="1.3"/><rect x="5.8" y="7" width="4" height="1.2" fill="#3c3f41"/></svg>
<span class="t" style="left:270.7px;top:726.5px;font-size:13px;color:#bbb;letter-spacing:0.06px;">Terminal</span>
<svg class="b" style="left:1255.5px;top:730px;" width="13" height="13" viewBox="0 0 13 13"><circle cx="6.5" cy="6.5" r="6.5" fill="#499c54"/></svg>
<span class="t" style="left:1257.6px;top:727.0px;font-size:7.5px;font-weight:700;color:#fff;letter-spacing:0.22px;">9+</span>
<span class="t" style="left:1273.5px;top:726.5px;font-size:13px;color:#bbb;letter-spacing:-0.12px;">Event Log</span>
<svg class="b" style="left:73px;top:751px;" width="13" height="13" viewBox="0 0 13 13"><rect x="0.7" y="2.7" width="9.6" height="9.6" fill="none" stroke="#afb1b3" stroke-width="1.3"/><path d="M3 0.7 H12.3 V10" fill="none" stroke="#afb1b3" stroke-width="1.3"/></svg>
<span class="t" style="left:94.9px;top:747.4px;font-size:15px;color:#bbb;letter-spacing:0.15px;">Externally added files can be added to Git // View Files // Always Add // Don't Ask Again (a minute ago)</span>
<span class="t" style="left:860.0px;top:747.4px;font-size:15px;color:#bbb;letter-spacing:-0.14px;">313 chars, 5 line breaks</span>
<span class="t" style="left:1031.0px;top:747.4px;font-size:15px;color:#bbb;letter-spacing:-0.29px;">7:5</span>
<span class="t" style="left:1063.2px;top:747.4px;font-size:15px;color:#bbb;letter-spacing:-0.80px;">LF</span>
<span class="t" style="left:1091.4px;top:747.4px;font-size:15px;color:#bbb;letter-spacing:-0.80px;">UTF-8</span>
<span class="t" style="left:1141.0px;top:747.4px;font-size:15px;color:#bbb;letter-spacing:0.45px;">EditorConfig</span>
<svg class="b" style="left:1244px;top:751px;" width="10" height="13" viewBox="0 0 10 13"><path d="M2.5 1V12M2.5 9 Q2.5 6.5 6 6 Q8 5.5 8 3" fill="none" stroke="#bbb" stroke-width="1.7"/><circle cx="2.5" cy="2" r="1.8" fill="#bbb"/><circle cx="2.5" cy="11" r="1.8" fill="#bbb"/><circle cx="8" cy="3" r="1.8" fill="#bbb"/></svg>
<span class="t" style="left:1259.6px;top:747.4px;font-size:15px;color:#bbb;letter-spacing:0.19px;">master</span>
<svg class="b" style="left:1316px;top:751px;" width="13" height="13" viewBox="0 0 13 13"><rect x="3.5" y="6" width="9" height="6.5" fill="#afb1b3"/><path d="M1.5 6 V3.8 Q1.5 1 4.2 1 Q7 1 7 3.8 V6" fill="none" stroke="#afb1b3" stroke-width="1.5"/></svg>
<svg class="b" style="left:1342px;top:752px;" width="12" height="12" viewBox="0 0 12 12"><circle cx="6" cy="6" r="5.6" fill="#5a5d5f"/><rect x="5.2" y="2.8" width="1.6" height="4" fill="#3c3f41"/><rect x="5.2" y="7.8" width="1.6" height="1.6" fill="#3c3f41"/></svg>
<div class="b" style="left:919px;top:650.5px;width:417.5px;height:65.5px;background:#4e5052;border:1px solid #56595b;box-sizing:border-box;box-shadow:0 2px 6px rgba(0,0,0,.25);"></div>
<svg class="b" style="left:929.5px;top:662px;" width="14" height="14" viewBox="0 0 14 14"><circle cx="7" cy="7" r="7" fill="#3b92c9"/><rect x="6" y="5.8" width="2" height="5.2" fill="#fff"/><rect x="6" y="2.8" width="2" height="2" fill="#fff"/></svg>
<span class="t" style="left:951.5px;top:660.8px;font-size:15px;color:#bbb;letter-spacing:0.08px;">Externally added files can be added to Git</span>
<span class="t" style="left:951.5px;top:682.8px;font-size:15px;color:#589df6;letter-spacing:-0.14px;">View Files</span>
<span class="t" style="left:1035.5px;top:682.8px;font-size:15px;color:#589df6;letter-spacing:0.02px;">Always Add</span>
<span class="t" style="left:1130.0px;top:682.8px;font-size:15px;color:#589df6;letter-spacing:0.29px;">Don't Ask Again</span>
<div class="b" style="left:67px;top:27px;width:1299px;height:28px;background:linear-gradient(to bottom,#3a3834 0%,#3a3834 12%,#4e4c46 94%,#55514b 97%,#55514b 100%);"></div>
<span class="t" style="left:630.0px;top:30.8px;font-size:15px;font-weight:700;color:#dfdbd2;letter-spacing:-0.10px;">dragro – error.blade.php</span>
<svg class="b" style="left:1304px;top:32px;" width="18" height="18" viewBox="0 0 18 18"><defs><linearGradient id="wbg" x1="0" y1="0" x2="0" y2="1"><stop offset="0" stop-color="#8a8880"/><stop offset="1" stop-color="#6a6861"/></linearGradient></defs><circle cx="9" cy="9" r="8" fill="url(#wbg)" stroke="#33322e" stroke-width="1"/><path d="M5.5 9.5H12.5" stroke="#3a3935" stroke-width="1.4"/></svg>
<svg class="b" style="left:1324px;top:32px;" width="18" height="18" viewBox="0 0 18 18"><circle cx="9" cy="9" r="8" fill="url(#wbg)" stroke="#33322e" stroke-width="1"/><rect x="5.7" y="6.3" width="6.6" height="5.4" fill="none" stroke="#3a3935" stroke-width="1.3"/></svg>
<svg class="b" style="left:1344px;top:32px;" width="18" height="18" viewBox="0 0 18 18"><defs><linearGradient id="clg" x1="0" y1="0" x2="0" y2="1"><stop offset="0" stop-color="#f37f4f"/><stop offset="1" stop-color="#e04c1e"/></linearGradient></defs><circle cx="9" cy="9" r="8" fill="url(#clg)" stroke="#8e3616" stroke-width="1"/><path d="M6.3 6.3L11.7 11.7M11.7 6.3L6.3 11.7" stroke="#5a2410" stroke-width="1.5"/></svg>
<div class="b" style="left:0;top:27px;width:67px;height:741px;background:linear-gradient(to bottom,#4f3639 0%,#4c3539 25%,#48333a 52%,#443238 78%,#3e3234 100%);"></div>
<div class="b" style="left:2.4px;top:120.3px;width:5.4px;height:5.4px;border-radius:50%;background:#e8581c;"></div>
<div class="b" style="left:2.4px;top:312.3px;width:5.4px;height:5.4px;border-radius:50%;background:#e8581c;"></div>
<div class="b" style="left:2.4px;top:376.3px;width:5.4px;height:5.4px;border-radius:50%;background:#e8581c;"></div>
<div class="b" style="left:2.4px;top:440.3px;width:5.4px;height:5.4px;border-radius:50%;background:#e8581c;"></div>
<div class="b" style="left:2.4px;top:504.3px;width:5.4px;height:5.4px;border-radius:50%;background:#e8581c;"></div>
<svg class="b" style="left:4px;top:30px;" width="60" height="60" viewBox="0 0 60 60"><defs><linearGradient id="tb1" x1=".1" y1="0" x2=".9" y2="1"><stop offset="0" stop-color="#35a8f4"/><stop offset=".45" stop-color="#1b6fd9"/><stop offset="1" stop-color="#3346ad"/></linearGradient>
<linearGradient id="tb2" x1="0" y1="0" x2="0" y2="1"><stop offset="0" stop-color="#2a86e4"/><stop offset=".55" stop-color="#1d4fb8"/><stop offset="1" stop-color="#1b1464"/></linearGradient></defs>
<path d="M13 11.5 A23.8 23.8 0 0 0 17.5 49.8 L17 45.5 L19.5 46.5 L18.5 43 L8.6 38.3 L7.8 30.5 L11 19.5 L15 14 Z" fill="url(#tb2)"/>
<path d="M11 19.5 L14 15 L24 15 L39 18 L40.6 39 L34.4 47.7 L8.6 38.3 L7.8 30.5Z" fill="#fafafa"/>
<path d="M8.6 38.3 L34.4 47.7 L35.2 46.4 L9 37Z" fill="#c9c4cc"/>
<path d="M11.9 20.6 L20.4 34.3 L38.4 28" fill="none" stroke="#8d8d92" stroke-width=".7"/>
<path d="M22.84 6 A23.8 23.8 0 1 1 31.07 52.71 L35.8 49.2 L33.6 48.4 L38.2 44.6 L36.1 43.9 L40.2 40.5 L37.6 40 L41 36 L38.3 35.4 L40.4 31 L38.1 30 L38.6 25 Q38 21.3 33 19.6 Q27 18 22 20 Q18 21.5 15.2 25.2 L13.8 22.6 Q13 17 16 12 Q19 7.6 22.84 6Z" fill="url(#tb1)"/>
<path d="M22.7 5.4 Q19 7.6 16 12 Q13 17 13.8 22.6 L15.2 25.2 Q18 21.5 22 20 Q24 14 30 10 Q26 6 22.7 5.4Z" fill="#3fb0f6" opacity=".55"/>
<path d="M13.8 22.4 L15.1 25.4 L16.4 22.6Z" fill="#bfe6fb"/>
<circle cx="18.6" cy="19" r="1.35" fill="#c9a44a"/><circle cx="18.6" cy="19" r=".95" fill="#1b1b1b"/></svg>
<svg class="b" style="left:4px;top:94px;" width="60" height="60" viewBox="0 0 60 60"><defs><linearGradient id="fl1" x1="0" y1="0" x2="0" y2="1"><stop offset="0" stop-color="#d9d9d9"/><stop offset="1" stop-color="#a9a9a9"/></linearGradient>
<linearGradient id="fl2" x1="0" y1="0" x2="0" y2="1"><stop offset="0" stop-color="#c6c6c6"/><stop offset="1" stop-color="#979797"/></linearGradient></defs>
<path d="M9.3 7 H48.5 L50 10 V47 H7.8 V10Z" fill="url(#fl1)"/>
<rect x="7.8" y="7" width="42.2" height="1" fill="#ececec"/>
<rect x="11.3" y="14.8" width="35.6" height="9.6" fill="#1c1c1c"/>
<rect x="14" y="16" width="30.5" height="3" fill="#c8561c"/>
<rect x="12.2" y="18.3" width="33.6" height="6" fill="#f3aa4c"/>
<rect x="13.8" y="19.8" width="30.4" height="1.3" fill="#fdf6ea"/>
<path d="M10 24 H47.8 V48.6 Q47.8 49.6 46.8 49.6 H11 Q10 49.6 10 48.6Z" fill="url(#fl2)"/>
<rect x="10" y="24" width="37.8" height="1.2" fill="#dedede"/>
<rect x="22" y="33.2" width="14" height="10.5" rx="2.2" fill="#b9b9b9" stroke="#a2a2a2" stroke-width=".6"/>
<rect x="24.2" y="35.3" width="9.8" height="5.8" rx=".8" fill="#4a4a4a"/><rect x="25.1" y="36.1" width="8" height="3.7" fill="#ededed"/></svg>
<svg class="b" style="left:4px;top:158px;" width="60" height="60" viewBox="0 0 60 60"><defs><linearGradient id="tm1" x1="0" y1="0" x2="0" y2="1"><stop offset="0" stop-color="#f0f0f0"/><stop offset="1" stop-color="#c4c4c4"/></linearGradient>
<linearGradient id="tm2" x1="0" y1="0" x2="0" y2="1"><stop offset="0" stop-color="#444"/><stop offset=".5" stop-color="#2b2b2b"/><stop offset="1" stop-color="#1c1c1c"/></linearGradient></defs>
<rect x="6.3" y="12.1" width="45.3" height="37.5" rx="1.6" fill="url(#tm1)"/>
<rect x="10" y="16" width="37.8" height="29.7" fill="url(#tm2)" stroke="#0c0c0c" stroke-width=".8"/>
<path d="M14.6 22 L21.6 26.4 L14.9 30.8" fill="none" stroke="#fafafa" stroke-width="2.6"/><rect x="23" y="31.6" width="8.3" height="2.4" fill="#fafafa"/></svg>
<svg class="b" style="left:4px;top:222px;" width="60" height="60" viewBox="0 0 60 60"><defs><linearGradient id="wr1" x1="0" y1="0" x2="0" y2="1"><stop offset="0" stop-color="#0f6ea6"/><stop offset="1" stop-color="#0a4878"/></linearGradient>
<linearGradient id="wr2" x1="0" y1="0" x2="0" y2="1"><stop offset="0" stop-color="#fbfbfb"/><stop offset="1" stop-color="#dcdcdc"/></linearGradient></defs>
<path d="M11.5 5.1 H31.3 L49 22.6 V50.2 Q49 52.7 46.5 52.7 H11.5 Q9 52.7 9 50.2 V7.6 Q9 5.1 11.5 5.1Z" fill="url(#wr1)"/>
<path d="M12.2 8.3 H30 L45.8 24 V49.6 H12.2Z" fill="url(#wr2)"/>
<path d="M37.4 5.3 H47.6 Q49 5.3 49 6.7 V16.8Z" fill="#0f6aa0"/>
<g fill="#0a4a7a"><rect x="17" y="23.2" width="8" height="1.7"/><rect x="17" y="27.3" width="8" height="1.7"/><rect x="17" y="31.3" width="8" height="1.7"/><rect x="17" y="35.3" width="24" height="1.7"/><rect x="17" y="39.3" width="24" height="1.7"/><rect x="17" y="43.2" width="17.8" height="1.7"/>
<rect x="27" y="23" width="14" height="9.8"/></g>
<rect x="27.9" y="23.9" width="12.2" height="8" fill="#8ccaf2"/><path d="M27.9 31.9 L31.4 25.8 L33.6 29.4 L35.5 27.6 L40.1 31.9Z" fill="#444"/><path d="M36.8 23.9 H40.1 V27 Q37.5 26.8 36.8 23.9Z" fill="#e8c13a"/></svg>
<svg class="b" style="left:10px;top:292px;" width="46" height="46" viewBox="0 0 46 46"><circle cx="23" cy="23" r="22.5" fill="#db4437"/>
<path d="M3.5 11.8 A22.5 22.5 0 0 0 20 45.3 L29.5 28.5 L23 23 L14 28.2Z" fill="#0f9d58"/>
<path d="M42.5 11.8 H23 L32 28.2 L20 45.3 A22.5 22.5 0 0 0 42.5 11.8Z" fill="#ffcd40"/>
<path d="M3.5 11.8 A22.5 22.5 0 0 1 42.5 11.8 H23 L14 28.2Z" fill="#db4437"/>
<path d="M3.5 11.8 L14 28.2 L16 18Z" fill="#c23a2e" opacity=".5"/>
<circle cx="23" cy="23" r="10.4" fill="#f1f1f1"/><circle cx="23" cy="23" r="8.3" fill="#4285f4"/></svg>
<svg class="b" style="left:12px;top:358px;" width="42" height="42" viewBox="0 0 42 42"><circle cx="21" cy="21" r="21" fill="#fff"/>
<g transform="translate(6.900 6.900) scale(.2295)">
<path d="M25.8 77.6c0 7.1-5.8 12.9-12.9 12.9S0 84.7 0 77.6s5.8-12.9 12.9-12.9h12.9v12.9zm6.5 0c0-7.1 5.8-12.9 12.9-12.9s12.9 5.8 12.9 12.9v32.3c0 7.1-5.8 12.9-12.9 12.9s-12.9-5.8-12.9-12.9V77.6z" fill="#e01e5a"/>
<path d="M45.2 25.8c-7.1 0-12.9-5.8-12.9-12.9S38.1 0 45.2 0s12.9 5.8 12.9 12.9v12.9H45.2zm0 6.5c7.1 0 12.9 5.8 12.9 12.9s-5.8 12.9-12.9 12.9H12.9C5.8 58.1 0 52.3 0 45.2s5.8-12.9 12.9-12.9h32.3z" fill="#36c5f0"/>
<path d="M97 45.2c0-7.1 5.8-12.9 12.9-12.9s12.9 5.8 12.9 12.9-5.8 12.9-12.9 12.9H97V45.2zm-6.5 0c0 7.1-5.8 12.9-12.9 12.9s-12.9-5.8-12.9-12.9V12.9C64.7 5.8 70.5 0 77.6 0s12.9 5.8 12.9 12.9v32.3z" fill="#2eb67d"/>
<path d="M77.6 97c7.1 0 12.9 5.8 12.9 12.9s-5.8 12.9-12.9 12.9-12.9-5.8-12.9-12.9V97h12.9zm0-6.500c-7.1 0-12.9-5.800-12.900-12.900s5.800-12.900 12.900-12.900h32.300c7.100 0 12.900 5.800 12.900 12.900s-5.800 12.900-12.900 12.900H77.600z" fill="#ecb22e"/></g></svg>
<svg class="b" style="left:4px;top:414px;" width="60" height="60" viewBox="0 0 60 60"><rect x="4.8" y="4.8" width="48.5" height="48.3" fill="#fff"/>
<rect x="7" y="6.9" width="43.6" height="35.7" rx="5.5" fill="none" stroke="#1a7aa8" stroke-width="3.1"/>
<path d="M23 43 H34.4 V49 H37.1 V53.1 H20.2 V49 H23Z" fill="#1a7aa8"/>
<path d="M36.5 9.8 C31 5.5 22 6.5 18.2 14 C14.5 21.5 15 31 19.5 37.2 C24 43.5 32.5 43 38 37.5 C33 40.5 26.500 40.200 22.700 35 C18.500 29.200 18.500 21 21.500 15.500 C24.500 10 31.500 9.200 35.200 12.700Z" fill="#2ab4ec" stroke="#2ab4ec" stroke-width=".8"/>
<path d="M18.8 21.5 C21.5 22 25 24.500 27.600 28 C30.500 22 35 15 40.200 11 C37 18 32 27 28.300 34.500 C26 30 22.500 25 18.800 21.500Z" fill="#2ab4ec" stroke="#2ab4ec" stroke-width="1.2" stroke-linejoin="round"/></svg>
<div class="b" style="left:2px;top:476px;width:62px;height:62px;border-radius:4px;background:#68585c;"></div>
<svg class="b" style="left:0px;top:474px;" width="68" height="68" viewBox="0 0 68 68"><defs><linearGradient id="ps1" x1=".3" y1="0" x2=".5" y2="1"><stop offset="0" stop-color="#ff2d90"/><stop offset=".5" stop-color="#b845f2"/><stop offset="1" stop-color="#6b57ff"/></linearGradient>
<linearGradient id="ps2" x1=".3" y1="0" x2=".6" y2="1"><stop offset="0" stop-color="#b44cf6"/><stop offset=".45" stop-color="#8a55fb"/><stop offset=".7" stop-color="#c640e8"/><stop offset="1" stop-color="#a446f0"/></linearGradient>
<linearGradient id="ps3" x1="0" y1="0" x2="0" y2="1"><stop offset="0" stop-color="#000"/><stop offset="1" stop-color="#262626"/></linearGradient></defs>
<path d="M32 17.500 L38.500 13.100 L50 15.800 L55.600 28.800 L50.500 35 L55 44.300 L46 47 L34.400 54 L23.500 49.600 L26 40Z" fill="url(#ps2)"/>
<path d="M10.600 19 L18.200 10.400 L34.100 14.200 L32 20 L21 30 L21 45.500 L15 44.300Z" fill="url(#ps1)"/>
<rect x="19.900" y="19.900" width="26.300" height="26.100" fill="url(#ps3)"/>
<rect x="22" y="40.900" width="9.900" height="2.100" fill="#fff"/>
<rect x="34.400" y="45" width="22.700" height="11.800" fill="#e0a030"/></svg>
<span class="t" style="left:22.0px;top:492.2px;font-size:14.8px;font-weight:700;color:#fff;letter-spacing:-0.27px;">PS</span>
<span class="t" style="left:36.3px;top:515.0px;font-size:9.8px;color:#3a2a10;letter-spacing:-0.20px;">EAP</span>
<svg class="b" style="left:4px;top:542px;" width="60" height="60" viewBox="0 0 60 60"><defs><linearGradient id="sw1" x1="0" y1="0" x2="1" y2="1"><stop offset="0" stop-color="#f28f52"/><stop offset="1" stop-color="#e8682a"/></linearGradient></defs>
<path d="M10 12.900 H47.800 L50 16.600 H7.800Z" fill="#d85a20"/>
<rect x="7.800" y="16.400" width="42.200" height="33.600" fill="url(#sw1)"/>
<rect x="7.800" y="40" width="42.200" height="10" fill="#f08850" opacity=".55"/>
<path d="M23.500 20.700 V11 Q23.500 8.500 26 8.500 H32 Q34.500 8.500 34.500 11 V20.700" fill="none" stroke="#e8602a" stroke-width="3"/>
<path d="M29.100 25 L20.200 42.800 H24.400 L29.100 32.500 L33.800 42.800 H38 Z" fill="#fff"/>
<rect x="19.900" y="35" width="18.400" height="4.100" rx="2" fill="#fff"/><rect x="21.500" y="36.200" width="10.100" height="1.700" rx=".8" fill="#e85a10"/></svg>
<svg class="b" style="left:4px;top:604px;" width="60" height="60" viewBox="0 0 60 60"><defs><linearGradient id="fz1" gradientUnits="userSpaceOnUse" x1="0" y1="6" x2="0" y2="56"><stop offset="0" stop-color="#cc0000"/><stop offset="1" stop-color="#8a0000"/></linearGradient></defs>
<g fill="url(#fz1)"><rect x="7" y="9" width="44" height="44"/></g><g fill="url(#fz1)"><circle cx="8.85" cy="9.3" r="3.2"/><circle cx="8.85" cy="52.7" r="3.2"/><circle cx="16.93" cy="9.3" r="3.2"/><circle cx="16.93" cy="52.7" r="3.2"/><circle cx="25.01" cy="9.3" r="3.2"/><circle cx="25.01" cy="52.7" r="3.2"/><circle cx="33.09" cy="9.3" r="3.2"/><circle cx="33.09" cy="52.7" r="3.2"/><circle cx="41.17" cy="9.3" r="3.2"/><circle cx="41.17" cy="52.7" r="3.2"/><circle cx="49.25" cy="9.3" r="3.2"/><circle cx="49.25" cy="52.7" r="3.2"/><circle cx="7.2" cy="10.90" r="3.2"/><circle cx="50.9" cy="10.90" r="3.2"/><circle cx="7.2" cy="18.93" r="3.2"/><circle cx="50.9" cy="18.93" r="3.2"/><circle cx="7.2" cy="26.96" r="3.2"/><circle cx="50.9" cy="26.96" r="3.2"/><circle cx="7.2" cy="34.99" r="3.2"/><circle cx="50.9" cy="34.99" r="3.2"/><circle cx="7.2" cy="43.02" r="3.2"/><circle cx="50.9" cy="43.02" r="3.2"/><circle cx="7.2" cy="51.05" r="3.2"/><circle cx="50.9" cy="51.05" r="3.2"/></g><rect x="7" y="9" width="44" height="44" fill="url(#fz1)"/>
<path d="M18.100 14.800 H38.100 L36.700 20.700 H24.200 L23 26.600 H45.200 L43.800 32 L30.500 43.400 C34.500 44.600 39 43.600 42.600 40.600 L42.200 46.900 C37 48.500 30 48.600 25 47.700 L23 44.300 L36 32 H21.900 L19.200 44.900 H12.100Z" fill="#fff"/></svg>
<svg class="b" style="left:4px;top:664px;" width="60" height="60" viewBox="0 0 60 60"><defs><linearGradient id="te1" x1="0" y1="0" x2="0" y2="1"><stop offset="0" stop-color="#e6e6e6"/><stop offset=".6" stop-color="#a9a4a6"/><stop offset="1" stop-color="#5e4e54"/></linearGradient></defs>
<rect x="9.400" y="18.700" width="33.600" height="21.100" rx="1" fill="url(#te1)"/>
<g stroke="#77767a" stroke-width=".9" stroke-dasharray="3 1 5 1.500 2 1"><path d="M13 25.400H40M13 27.500H28M13 30.500H38M13 32.400H30M13 35.400H25"/></g><ellipse cx="14.5" cy="19" rx="1.500" ry="2.900" fill="#f6f6f6" stroke="#6a6a6a" stroke-width=".5"/><ellipse cx="18.5" cy="19" rx="1.500" ry="2.900" fill="#f6f6f6" stroke="#6a6a6a" stroke-width=".5"/><ellipse cx="22.5" cy="19" rx="1.500" ry="2.900" fill="#f6f6f6" stroke="#6a6a6a" stroke-width=".5"/><ellipse cx="26.6" cy="19" rx="1.500" ry="2.900" fill="#f6f6f6" stroke="#6a6a6a" stroke-width=".5"/><ellipse cx="30.5" cy="19" rx="1.500" ry="2.900" fill="#f6f6f6" stroke="#6a6a6a" stroke-width=".5"/><ellipse cx="34.5" cy="19" rx="1.500" ry="2.900" fill="#f6f6f6" stroke="#6a6a6a" stroke-width=".5"/><ellipse cx="38.5" cy="19" rx="1.500" ry="2.900" fill="#f6f6f6" stroke="#6a6a6a" stroke-width=".5"/>
<path d="M29.300 39.500 L31.500 36.500 L47 22 L50.300 25.500 L34.500 39.500Z" fill="#c98324"/><path d="M31.500 36.500 L47 22 L48.400 23.500 L33 38Z" fill="#e6a94e"/>
<path d="M45.800 23.100 L48 21 L51.400 24.500 L49.200 26.600Z" fill="#cfcfcf"/><path d="M48 21 Q50.500 18.500 52.500 20.500 Q54.300 22.600 51.400 24.500Z" fill="#e2353d"/></svg>
<svg class="b" style="left:17px;top:720px;" width="32" height="33" viewBox="0 0 32 33"><circle cx="4" cy="4" r="3" fill="#ebe9e6"/><circle cx="4" cy="16.2" r="3" fill="#ebe9e6"/><circle cx="4" cy="28.4" r="3" fill="#ebe9e6"/><circle cx="16" cy="4" r="3" fill="#ebe9e6"/><circle cx="16" cy="16.2" r="3" fill="#ebe9e6"/><circle cx="16" cy="28.4" r="3" fill="#ebe9e6"/><circle cx="28" cy="4" r="3" fill="#ebe9e6"/><circle cx="28" cy="16.2" r="3" fill="#ebe9e6"/><circle cx="28" cy="28.4" r="3" fill="#ebe9e6"/></svg>
<div class="b" style="left:0;top:0;width:1366px;height:27px;background:linear-gradient(to bottom,#5a564e 0%,#4a4741 38%,#3f3d39 78%,#3b3935 100%);"></div>
<span class="t" style="left:12.0px;top:3.5px;font-size:15px;font-weight:700;color:#e8e6e3;letter-spacing:0.13px;text-shadow:0 1px 1px rgba(0,0,0,.55);">Activities</span>
<svg class="b" style="left:100px;top:4px;" width="18" height="18" viewBox="0 0 18 18"><defs><linearGradient id="psg" x1=".2" y1="0" x2=".6" y2="1"><stop offset="0" stop-color="#ff2d90"/><stop offset=".5" stop-color="#b845f2"/><stop offset="1" stop-color="#7a55fb"/></linearGradient></defs>
<path d="M0.800 4.200 L3 1.500 L8.200 2.600 L10 1.900 L14.600 2.900 L16 7.500 L14.700 9.200 L15.800 12.500 L9.500 15.300 L5.500 13.500 L2.200 12.700Z" fill="url(#psg)"/><rect x="4" y="4.600" width="8.200" height="8.200" fill="#0a0a0a"/><rect x="4.800" y="10.700" width="3" height=".8" fill="#bbb"/><rect x="8.600" y="12" width="7.400" height="3.800" fill="#e0a030"/></svg>
<span class="t" style="left:104.6px;top:1.6px;font-size:4.6px;font-weight:700;color:#eee;letter-spacing:0.33px;">PS</span>
<span class="t" style="left:122.5px;top:3.5px;font-size:15px;font-weight:700;color:#e8e6e3;letter-spacing:-0.21px;text-shadow:0 1px 1px rgba(0,0,0,.55);">PhpStorm</span>
<svg class="b" style="left:197px;top:11px;" width="10" height="6" viewBox="0 0 10 6"><path d="M0 0 H10 L5 5.5 Z" fill="#dcdad5"/></svg>
<span class="t" style="left:670.5px;top:3.5px;font-size:15px;font-weight:700;color:#e8e6e3;letter-spacing:-0.32px;white-space:pre;text-shadow:0 1px 1px rgba(0,0,0,.55);">Mon  3:47 PM</span>
<svg class="b" style="left:1209px;top:3px;" width="20" height="20" viewBox="0 0 20 20"><g transform="translate(0.4 0.4) scale(.1563)" fill="#fff">
<path d="M25.8 77.6c0 7.1-5.8 12.9-12.9 12.9S0 84.7 0 77.6s5.8-12.9 12.9-12.9h12.9v12.9zm6.5 0c0-7.1 5.8-12.9 12.9-12.9s12.9 5.8 12.9 12.9v32.3c0 7.1-5.8 12.9-12.9 12.9s-12.9-5.8-12.9-12.9V77.6z"/>
<path d="M45.2 25.8c-7.1 0-12.9-5.8-12.9-12.9S38.1 0 45.2 0s12.9 5.8 12.9 12.9v12.9H45.2zm0 6.5c7.1 0 12.9 5.8 12.9 12.9s-5.8 12.9-12.9 12.9H12.9C5.8 58.1 0 52.3 0 45.2s5.8-12.9 12.9-12.9h32.3z"/>
<path d="M97 45.2c0-7.1 5.8-12.9 12.9-12.9s12.9 5.8 12.9 12.9-5.8 12.9-12.9 12.9H97V45.2zm-6.5 0c0 7.1-5.8 12.9-12.9 12.9s-12.9-5.8-12.9-12.9V12.9C64.7 5.8 70.5 0 77.6 0s12.9 5.8 12.9 12.9v32.3z"/>
<path d="M77.6 97c7.1 0 12.9 5.8 12.9 12.9s-5.8 12.9-12.9 12.9-12.9-5.8-12.9-12.9V97h12.9zm0-6.500c-7.1 0-12.9-5.800-12.900-12.900s5.800-12.900 12.900-12.900h32.300c7.100 0 12.900 5.800 12.900 12.900s-5.800 12.900-12.900 12.900H77.600z"/></g></svg>
<svg class="b" style="left:1259px;top:5px;" width="16" height="16" viewBox="0 0 16 16"><g fill="none" stroke-linecap="butt"><path d="M1.5 6.5 A9.5 9.5 0 0 1 14.5 6.5" stroke="#9b9993" stroke-width="1.8"/><path d="M4 9.3 A6 6 0 0 1 12 9.3" stroke="#dddbd6" stroke-width="1.8"/></g><circle cx="8" cy="12.6" r="1.9" fill="#e8e6e1"/></svg>
<svg class="b" style="left:1286px;top:5px;" width="17" height="16" viewBox="0 0 17 16"><path d="M1 6H4L8 2V14L4 10H1Z" fill="#e2e0db"/><g fill="none" stroke-width="1.6"><path d="M10 5.3 A3.6 3.6 0 0 1 10 10.7" stroke="#e2e0db"/><path d="M12 3.2 A6.2 6.2 0 0 1 12 12.8" stroke="#bdbbb5"/><path d="M14 1.4 A8.6 8.6 0 0 1 14 14.6" stroke="#8f8d87"/></g></svg>
<svg class="b" style="left:1316px;top:5px;" width="14" height="17" viewBox="0 0 14 17"><path d="M4.5 0.5H9.5V2.5H12.5V16H1.5V2.5H4.5Z" fill="none" stroke="#e2e0db" stroke-width="1.5"/><rect x="4" y="5" width="6" height="2" fill="#e2e0db"/><rect x="4" y="8.3" width="6" height="2" fill="#e2e0db"/><rect x="4" y="11.6" width="6" height="2" fill="#e2e0db"/></svg>
<svg class="b" style="left:1341px;top:11px;" width="10" height="6" viewBox="0 0 10 6"><path d="M0 0 H10 L5 5.5 Z" fill="#dcdad5"/></svg>
</body></html>
